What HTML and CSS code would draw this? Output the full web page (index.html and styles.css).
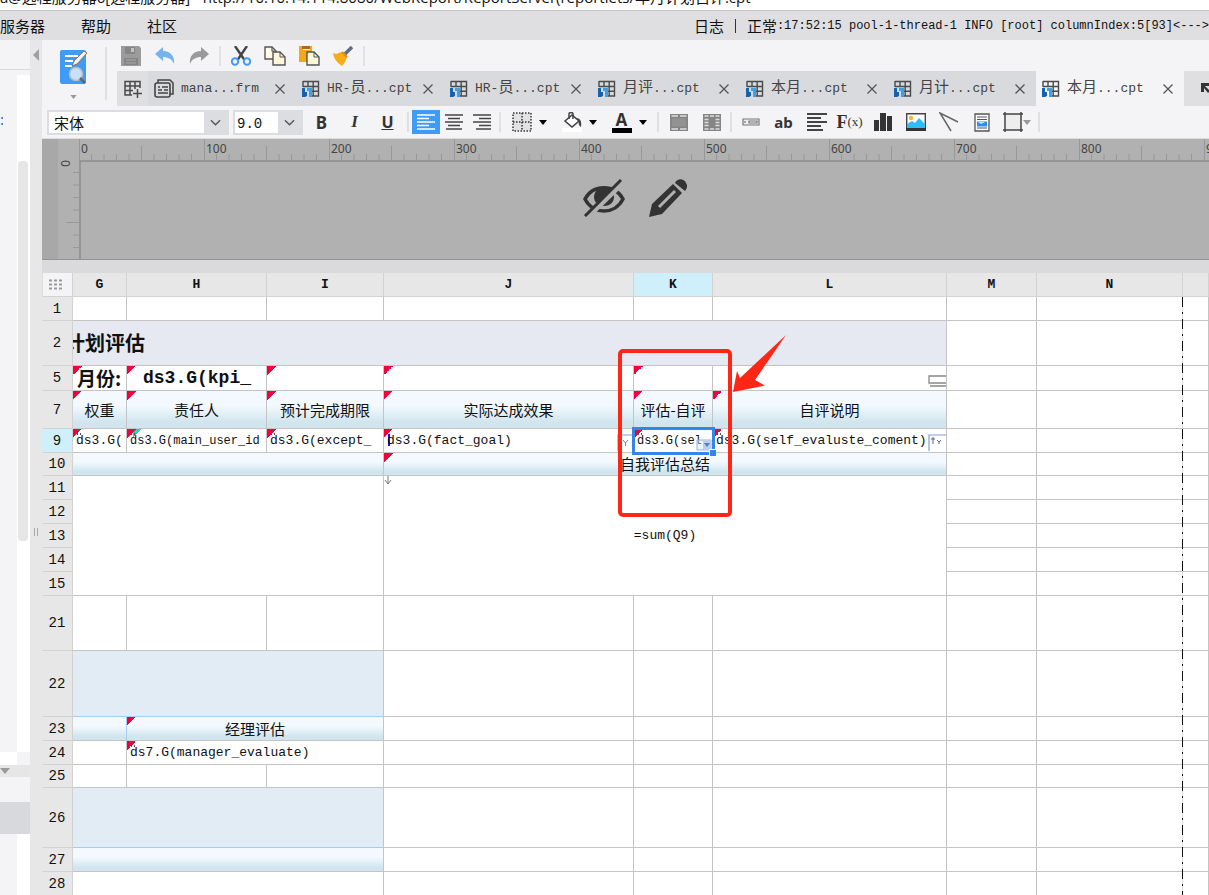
FILE: index.html
```html
<!DOCTYPE html>
<html lang="zh-CN">
<head>
<meta charset="utf-8">
<title>月计划自评.cpt</title>
<link rel="stylesheet" href="styles.css">
</head>
<body>
<svg class="defs" aria-hidden="true">
  <symbol id="cpt" viewBox="0 0 18 18"><path d="M1 1.500h15.500v14.500H9M1 1v6M1 6.500h15.500M6 1v6M11.200 1v15M9 11.300h7.500" fill="none" stroke="#4a4a4a" stroke-width="1.400"/><path d="M0 8h3v4h2v-1l3-3H5v8l-2 1H0z" fill="#1462b0"/><path d="M5 8h5v9H7v-6H5z" fill="#35a4ea"/></symbol>
  <symbol id="x" viewBox="0 0 12 12"><path d="M1.500 1.500l9 9M10.500 1.500l-9 9" stroke="#555" stroke-width="1.300"/></symbol>
  <symbol id="chev" viewBox="0 0 12 8"><path d="M1 1.500l5 5 5-5" fill="none" stroke="#555" stroke-width="1.500"/></symbol>
  <symbol id="caret" viewBox="0 0 8 5"><path d="M0 0h8L4 5z"/></symbol>
</svg>
<header class="titlebar">a@远程服务器6[远程服务器] - http://10.10.14.114:8080/WebReport/ReportServer(reportlets/年月计划自评.cpt</header>
<nav class="menubar">
  <button class="menu">服务器</button><button class="menu">帮助</button><button class="menu">社区</button>
  <div class="log"><span class="status">日志<i></i>正常</span><span class="mono">:17:52:15 pool-1-thread-1 INFO [root] columnIndex:5[93]&lt;---&gt;</span></div>
</nav>
<div class="workspace">
  <aside class="side">
    <div class="side-head"></div>
    <div class="side-tree"><span class="side-text">:</span><div class="side-scroll"><div class="thumb"></div></div></div>
    <div class="side-corner"></div>
    <div class="side-split"><svg width="10" height="6" viewBox="0 0 10 6"><path d="M0 0h10L5 6z" fill="#999"/></svg></div>
    <div class="side-gap"></div><div class="side-sel"></div>
    <div class="side-rest"></div>
  </aside>
  <div class="splitter"><svg width="6" height="12" viewBox="0 0 6 12"><path d="M6 0v12L0 6z" fill="#a0a0a0"/></svg><i class="grip"></i></div>
  <main class="editor">
    <div class="top">
      <button class="preview" aria-label="预览">
        <svg width="28" height="36" viewBox="0 0 28 36"><rect y="1" width="26" height="34" rx="2" fill="#409bf7"/><path d="M5 7h13M5 12h8M5 17h7" stroke="#fff" stroke-width="2"/><path d="M12 17l2-5L24 2l3 2-10 11z" fill="#f4f4f4" stroke="#777"/><circle cx="16" cy="25" r="6.500" fill="#c8e1fa" stroke="#bbb" stroke-width="1.500"/><path d="M20 29l5 5" stroke="#666" stroke-width="2.500"/></svg>
        <svg class="grey" width="7" height="4"><use href="#caret"/></svg>
      </button>
      <div class="top-right">
        <div class="quick">
          <button aria-label="保存"><svg width="20" height="20" viewBox="0 0 20 20"><path d="M0 0h18l2 2v18H0z" fill="#9b9b9b"/><path d="M4 1h10v7H4zM3 12h14v7H3z" fill="#858585"/><path d="M10 2h3v4h-3z" fill="#c4c4c4"/><path d="M5 14h10M5 17h10" stroke="#aaa"/></svg></button>
          <button aria-label="撤销"><svg width="20" height="20" viewBox="0 0 20 20"><path d="M8 1L0 8l8 7v-4c5 0 9 2 11 7 1-7-3-13-11-13z" fill="#76b3ee"/></svg></button>
          <button aria-label="重做"><svg width="20" height="20" viewBox="0 0 20 20"><path d="M12 1l8 7-8 7v-4c-5 0-9 2-11 7C0 11 4 5 12 5z" fill="#9a9a9a"/></svg></button>
          <i class="sep"></i>
          <button aria-label="剪切"><svg width="20" height="20" viewBox="0 0 20 20"><path d="M4 0l9.500 14M16 0L6.500 14" stroke="#444" stroke-width="2.400"/><circle cx="4" cy="15.500" r="3.200" fill="none" stroke="#409bf7" stroke-width="2"/><circle cx="16" cy="15.500" r="3.200" fill="none" stroke="#409bf7" stroke-width="2"/></svg></button>
          <button aria-label="复制"><svg width="22" height="20" viewBox="0 0 22 20"><path d="M1 1h7l4 4v8H1z" fill="#fffbe8" stroke="#555" stroke-width="1.400"/><path d="M8 1v4h4M16 6v5h5" fill="none" stroke="#555" stroke-width="1.200"/><path d="M9 6h7l5 5v8H9z" fill="#fff6dc" stroke="#555" stroke-width="1.400"/><path d="M16 6v5h5" fill="none" stroke="#555"/></svg></button>
          <button aria-label="粘贴"><svg width="22" height="20" viewBox="0 0 22 20"><path d="M1 0h13v16H1z" fill="#f0a81c"/><path d="M4 0h8v3H4z" fill="#b8622a"/><path d="M5 3.500h7" stroke="#fff"/><path d="M9 6h7l5 5v8H9z" fill="#fff6dc" stroke="#555" stroke-width="1.400"/><path d="M16 6v5h5" fill="none" stroke="#555"/></svg></button>
          <button aria-label="格式刷"><svg width="20" height="20" viewBox="0 0 20 20"><path d="M12 8l7-7" stroke="#646c80" stroke-width="3.500"/><path d="M0 7c4 2 7-1 9-1l5 5c-1 3-2 6-5 9-4-3-8-6-9-13z" fill="#f6ad18"/><path d="M9 6l5 5" stroke="#e98a10" stroke-width="2"/></svg></button>
          <i class="sep"></i>
        </div>
        <div class="tabs">
          <button class="add" aria-label="新建"><svg width="18" height="18" viewBox="0 0 18 18"><path d="M8 15H1V1.500h15V8M1 6h15M1 10.500h8M6 1v14M11 1v8M13.500 9v9M9 13.500h9" fill="none" stroke="#4a4a4a" stroke-width="1.500"/></svg></button>
          <button class="tab"><svg width="20" height="19" viewBox="0 0 20 19"><path d="M4 4V1h12l3 3v11h-3" fill="none" stroke="#444" stroke-width="1.500"/><rect x="1" y="4" width="15" height="14" rx="2" fill="#d9dadd" stroke="#444" stroke-width="1.600"/><path d="M4 8h2M8 8h6M4 11h4M10 11h4M4 14h10" stroke="#444" stroke-width="1.600"/></svg><span class="mono">mana...frm</span><svg class="close"><use href="#x"/></svg></button>
          <button class="tab"><svg class="cpt"><use href="#cpt"/></svg><span class="mono">HR-<b>员</b>...cpt</span><svg class="close"><use href="#x"/></svg></button>
          <button class="tab"><svg class="cpt"><use href="#cpt"/></svg><span class="mono">HR-<b>员</b>...cpt</span><svg class="close"><use href="#x"/></svg></button>
          <button class="tab"><svg class="cpt"><use href="#cpt"/></svg><span class="mono"><b>月评</b>...cpt</span><svg class="close"><use href="#x"/></svg></button>
          <button class="tab"><svg class="cpt"><use href="#cpt"/></svg><span class="mono"><b>本月</b>...cpt</span><svg class="close"><use href="#x"/></svg></button>
          <button class="tab"><svg class="cpt"><use href="#cpt"/></svg><span class="mono"><b>月计</b>...cpt</span><svg class="close"><use href="#x"/></svg></button>
          <button class="tab active"><svg class="cpt"><use href="#cpt"/></svg><span class="mono"><b>本月</b>...cpt</span><svg class="close"><use href="#x"/></svg></button>
          <button class="more" aria-label="更多"><svg width="12" height="12" viewBox="0 0 12 12"><path d="M0 0h12v3H4l5 5-2 2-4-5v4H0z" fill="#333"/></svg></button>
        </div>
      </div>
    </div>
    <div class="format">
      <label class="pick family"><select aria-label="字体"><option>宋体</option></select><svg><use href="#chev"/></svg></label>
      <label class="pick size"><select class="mono" aria-label="字号"><option>9.0</option></select><svg><use href="#chev"/></svg></label>
      <button class="b">B</button><button class="it">I</button><button class="u">U</button>
      <i class="sep"></i>
      <button class="al on" aria-label="左对齐"><svg width="20" height="18" viewBox="0 0 20 18"><path d="M1 2h18M1 5.500h12M1 9h18M1 12.500h12M1 16h18" stroke="#fff" stroke-width="1.500"/></svg></button>
      <button class="al" aria-label="居中"><svg width="20" height="18" viewBox="0 0 20 18"><path d="M1 2h18M4 5.500h12M1 9h18M4 12.500h12M2 16h16" stroke="#444" stroke-width="1.500"/></svg></button>
      <button class="al" aria-label="右对齐"><svg width="20" height="18" viewBox="0 0 20 18"><path d="M1 2h18M7 5.500h12M1 9h18M7 12.500h12M4 16h15" stroke="#444" stroke-width="1.500"/></svg></button>
      <i class="sep"></i>
      <button class="dd" aria-label="边框"><svg width="20" height="20" viewBox="0 0 20 20"><path d="M1 1h18v18H1zM10 1v18M1 10h18" fill="#e2e2e4" stroke="#333" stroke-width="1.500" stroke-dasharray="1.500 1.500"/></svg><svg class="car"><use href="#caret"/></svg></button>
      <button class="dd" aria-label="填充"><svg width="20" height="20" viewBox="0 0 20 20"><path d="M3 9l7-6 7 6-7 6z" fill="#fff" stroke="#444" stroke-width="1.600"/><path d="M7 7V2c0-2 4-2 4 0v5" fill="none" stroke="#444" stroke-width="1.500"/><path d="M14 6c4 0 6 3 5 9-2-1-3-4-2-6z" fill="#444"/><path d="M0 16h20v4H0z" fill="#fff"/></svg><svg class="car"><use href="#caret"/></svg></button>
      <button class="dd" aria-label="字体颜色"><span class="fontcolor">A</span><svg class="car"><use href="#caret"/></svg></button>
      <i class="sep"></i>
      <button aria-label="合并单元格"><svg width="18" height="17" viewBox="0 0 18 17"><path d="M0 0h18v17H0z" fill="#858585"/><path d="M1.500 2h6.500M10 2h6.500M1.500 15h6.500M10 15h6.500" stroke="#ddd" stroke-width="1.500"/><path d="M2 4.500h14v8H2z" fill="#929292"/></svg></button>
      <button aria-label="取消合并"><svg width="18" height="17" viewBox="0 0 18 17"><path d="M0 0h18v17H0z" fill="#858585"/><path d="M1.500 2h4M7 2h4M12.500 2h4M1.500 15h4M7 15h4M12.500 15h4M1.500 8.500h4M12.500 8.500h4M1.500 11.500h4M12.500 11.500h4M1.500 5.500h4M12.500 5.500h4" stroke="#ddd" stroke-width="1.500"/></svg></button>
      <i class="sep near"></i>
      <button aria-label="控件"><svg width="18" height="8" viewBox="0 0 18 8"><path d="M1 1h16v6H1zM3 3v2M7 3h8v2H7z" fill="#eee" stroke="#777" stroke-width="1.200"/></svg></button>
      <button class="ab">ab</button>
      <button aria-label="段落"><svg width="20" height="18" viewBox="0 0 20 18"><path d="M0 1h20M0 5h14M0 9h20M0 13h14M0 17h16" stroke="#444" stroke-width="1.800"/></svg></button>
      <button class="fx">F<small>(x)</small></button>
      <button aria-label="图表"><svg width="18" height="18" viewBox="0 0 18 18"><path d="M0 7h5v11H0zM6 0h6v18H6zM13 3h5v15h-5z" fill="#333"/></svg></button>
      <button aria-label="图片"><svg width="20" height="18" viewBox="0 0 20 18"><path d="M.7.700h18.600v16.600H.7z" fill="#fff" stroke="#444" stroke-width="1.400"/><path d="M1 11l5-3 3 2 4-5 6 6v4H1z" fill="#2fbdf6"/><path d="M0 15h20v3H0z" fill="#333"/><circle cx="5" cy="5" r="2.200" fill="#fbb62b"/></svg></button>
      <button aria-label="斜线"><svg width="20" height="20" viewBox="0 0 20 20"><path d="M12 19L1 1l18 9" fill="none" stroke="#666" stroke-width="1.500"/></svg></button>
      <button aria-label="子报表"><svg width="16" height="19" viewBox="0 0 16 19"><path d="M1 1h14v17H1z" fill="#fff" stroke="#555" stroke-width="1.300"/><path d="M3 4h10M3 6.500h10M3 15h10" stroke="#555"/><path d="M3 8.500h10v5H3z" fill="#2f8ded"/><path d="M4 9h7l-4 2z" fill="#c5e7ff"/></svg></button>
      <button class="frame" aria-label="悬浮元素"><svg width="20" height="20" viewBox="0 0 20 20"><path d="M2 2h16v16H2z" fill="#eee"/><path d="M2 0v20M18 0v20M0 2h20M0 18h20" stroke="#444" stroke-width="1.500"/></svg><svg class="car grey"><use href="#caret"/></svg></button>
      <i class="sep near"></i>
    </div>
    <section class="param">
      <svg class="hruler" aria-hidden="true">
        <defs><pattern id="hticks" x="37" width="125" height="22" patternUnits="userSpaceOnUse"><path d="M.5 0v22M62.500 7v15" stroke="#989898"/><path d="M12.500 15v7M25 15v7M37.500 15v7M50 15v7M75 15v7M87.500 15v7M100 15v7M112.500 15v7" stroke="#989898"/></pattern></defs>
        <rect class="dark" width="16" height="22"/><rect x="37" width="100%" height="22" fill="url(#hticks)"/>
        <text x="39" y="14">0</text><text x="164" y="14">100</text><text x="289" y="14">200</text><text x="414" y="14">300</text><text x="539" y="14">400</text><text x="664" y="14">500</text><text x="789" y="14">600</text><text x="914" y="14">700</text><text x="1039" y="14">800</text><text x="1164" y="14">900</text>
      </svg>
      <div class="param-body">
        <svg class="vruler" aria-hidden="true"><rect class="dark" width="16" height="100"/><path d="M31 12.500h6M31 25h6M31 37.500h6M31 50h6M24 62.500h13M31 75h6M31 87.500h6" stroke="#989898"/><text transform="translate(19 0) rotate(90)">0</text></svg>
        <div class="canvas">
          <button aria-label="隐藏"><svg width="42" height="38" viewBox="0 0 42 38"><path d="M2 20C10 5 32 5 40 20 32 36 10 36 2 20z" fill="none" stroke="#333" stroke-width="3.500"/><path d="M11 18c0-12 20-12 20 0 0 12-20 12-20 0z" fill="#333"/><path d="M5 37L40 3" stroke="#b1b1b1" stroke-width="6"/><path d="M2 37L38 1" stroke="#333" stroke-width="3"/></svg></button>
          <button aria-label="编辑"><svg width="38" height="38" viewBox="0 0 38 38"><path d="M0 38l3-13L24 5l9 9-20 21z" fill="#333"/><path d="M10 28L26 12" stroke="#b1b1b1" stroke-width="3"/><path d="M26 4c2-5 9-5 11 0 2 3 1 5-1 8z" fill="#333"/></svg></button>
        </div>
      </div>
    </section>
    <section class="sheet">
      <table>
        <colgroup><col class="c-n"><col class="c-g"><col class="c-h"><col class="c-i"><col class="c-j"><col class="c-k"><col class="c-l"><col class="c-m"><col class="c-o"><col></colgroup>
        <thead><tr class="h24"><th class="corner"><svg width="13" height="11" viewBox="0 0 13 11"><path d="M0 1.500h3m2 0h3m2 0h3M0 5.500h3m2 0h3m2 0h3M0 9.500h3m2 0h3m2 0h3" stroke="#999" stroke-width="2"/></svg></th><th>G</th><th>H</th><th>I</th><th>J</th><th class="hot">K</th><th>L</th><th>M</th><th>N</th><th></th></tr></thead>
        <tbody>
        <tr class="h24"><th>1</th><td></td><td></td><td></td><td></td><td></td><td></td><td></td><td></td><td></td></tr>
        <tr class="h45"><th>2</th><td class="title" colspan="6">计划评估</td><td></td><td></td><td></td></tr>
        <tr class="h25"><th>5</th><td class="mk big">月份:</td><td class="mk big mono pad">ds3.G(kpi_</td><td class="mk"></td><td class="mk"></td><td class="mk"></td><td class="right"><svg width="18" height="12" viewBox="0 0 18 12"><path d="M18 1H1v7h17M2 11h16" fill="none" stroke="#888" stroke-width="1.300"/></svg></td><td></td><td></td><td></td></tr>
        <tr class="h38"><th>7</th><td class="mk grad">权重</td><td class="mk grad">责任人</td><td class="mk grad">预计完成期限</td><td class="mk grad">实际达成效果</td><td class="mk grad">评估-自评</td><td class="mk grad">自评说明</td><td></td><td></td><td></td></tr>
        <tr class="h24"><th class="hot">9</th><td class="mk code">ds3.G(</td><td class="mk code teal">ds3.G(main_user_id</td><td class="mk code">ds3.G(except_</td><td class="mk code anchor"><div class="field">ds3.G(fact_goal)<svg width="16" height="17" viewBox="0 0 16 17"><path d="M16 1H1v16" fill="none" stroke="#7da0d4" stroke-width="1.200"/><path d="M6 6l2.500 3L11 6M8.500 9v3" fill="none" stroke="#789"/></svg></div></td><td class="mk code selected"><div class="field">ds3.G(sel<svg width="16" height="12" viewBox="0 0 16 12"><path d="M1 1h14v10H1z" fill="#dce8f8" fill-opacity=".5" stroke="#8fb0dc"/><path d="M7 1h8v10H7z" fill="#b8cfee"/><path d="M8 4h6l-3 4z" fill="#5d7fb5"/></svg></div><i class="handle"></i></td><td class="mk code"><div class="field">ds3.G(self_evaluste_coment)<svg width="18" height="17" viewBox="0 0 18 17"><path d="M18 1H1v16" fill="none" stroke="#7da0d4" stroke-width="1.200"/><path d="M3 5h4M5 3v7M9 6l2 2 2-2M11 8v2" fill="none" stroke="#567"/></svg></div></td><td></td><td></td><td></td></tr>
        <tr class="h23"><th>10</th><td class="grad" colspan="3"></td><td class="mk grad" colspan="3">自我评估总结</td><td></td><td></td><td></td></tr>
        <tr class="h24"><th>11</th><td colspan="3" rowspan="5"></td><td class="mono formula" colspan="3" rowspan="5"><svg class="expand" width="8" height="9" viewBox="0 0 8 9"><path d="M4 0v7M1 4l3 4 3-4" fill="none" stroke="#777"/></svg>=sum(Q9)</td><td></td><td></td><td></td></tr>
        <tr class="h24"><th>12</th><td></td><td></td><td></td></tr>
        <tr class="h24"><th>13</th><td></td><td></td><td></td></tr>
        <tr class="h24"><th>14</th><td></td><td></td><td></td></tr>
        <tr class="h24"><th>15</th><td></td><td></td><td></td></tr>
        <tr class="h55"><th>21</th><td></td><td></td><td></td><td></td><td></td><td></td><td></td><td></td><td></td></tr>
        <tr class="h66"><th>22</th><td class="pale" colspan="3"></td><td></td><td></td><td></td><td></td><td></td><td></td></tr>
        <tr class="h24"><th>23</th><td class="grad blue"></td><td class="mk grad blue" colspan="2">经理评估</td><td></td><td></td><td></td><td></td><td></td><td></td></tr>
        <tr class="h24"><th>24</th><td></td><td class="mk code" colspan="2">ds7.G(manager_evaluate)</td><td></td><td></td><td></td><td></td><td></td><td></td></tr>
        <tr class="h23"><th>25</th><td></td><td></td><td></td><td></td><td></td><td></td><td></td><td></td><td></td></tr>
        <tr class="h60"><th>26</th><td class="pale" colspan="3"></td><td></td><td></td><td></td><td></td><td></td><td></td></tr>
        <tr class="h24"><th>27</th><td class="grad blue" colspan="3"></td><td></td><td></td><td></td><td></td><td></td><td></td></tr>
        <tr class="h24"><th>28</th><td colspan="3"></td><td></td><td></td><td></td><td></td><td></td><td></td></tr>
        </tbody>
      </table>
      <i class="pagebreak"></i>
      <i class="callout"></i>
      <svg class="arrow" width="56" height="60" viewBox="0 0 56 60"><path d="M54 1L23 46l10 5.500L1 58l4-21 3 7z" fill="#ff2616"/></svg>
    </section>
  </main>
</div>
</body>
</html>
```
FILE: styles.css
```css
* { box-sizing: border-box; }
body { margin: 0; height: 100vh; overflow: hidden; display: flex; flex-direction: column; background: #fff; color: #111; font: 15px/20px "Noto Sans CJK SC", sans-serif; }
button { border: 0; background: none; padding: 0; margin: 0; color: #333; font: inherit; display: flex; align-items: center; justify-content: center; }
svg { flex: none; display: block; }
.defs { display: none; }
.mono { font-family: "Liberation Mono", "Noto Sans CJK SC", monospace; font-size: 13px; }
.titlebar { flex: none; height: 11px; overflow: hidden; white-space: nowrap; display: flex; align-items: flex-end; padding-bottom: 4px; font-family: "Open Sans", "Noto Sans CJK SC", sans-serif; line-height: 18px; border-bottom: 1px solid #c4c4c4; }
.menubar { flex: none; height: 29px; background: #dfdfe1; display: flex; align-items: center; gap: 36px; overflow: hidden; }
.menu { color: #111; }
.log { margin-left: auto; display: flex; white-space: nowrap; }
.log .mono { font-size: 12px; line-height: 22px; }
.status { display: flex; align-items: center; }
.status i { width: 1px; height: 14px; margin: 0 11px; background: #333; }
.workspace { flex: 1; display: flex; min-height: 0; }

.side { width: 30px; flex: none; display: flex; flex-direction: column; background: #f4f4f7; }
.side-head { height: 30px; border-bottom: 1px solid #d8d8da; }
.side-tree { height: 682px; padding-top: 5px; display: flex; justify-content: space-between; }
.side-text { color: #3b6fc4; width: 3px; padding-top: 34px; overflow: hidden; }
.side-scroll { width: 13px; background: #fff; padding: 86px 2px 0 1px; }
.thumb { height: 380px; border-radius: 4px; background: #e6e6e6; }
.side-corner { height: 13px; margin-right: 13px; background: #fff; }
.side-split { height: 12px; background: #e6e6e6; padding-top: 3px; }
.side-gap { height: 25px; }
.side-sel { height: 32px; background: #d8d9dc; }
.side-rest { flex: 1; margin-left: 17px; background: #fff; }
.splitter { width: 12px; flex: none; background: #e7e7e7; display: flex; flex-direction: column; align-items: center; padding-top: 9px; }
.grip { width: 4px; height: 8px; margin-top: 467px; border: solid #aaa; border-width: 0 1px; }

.editor { flex: 1; min-width: 0; background: #f4f4f7; display: flex; flex-direction: column; }
.top { height: 66px; flex: none; display: flex; }
.preview { width: 65px; height: 53px; margin: 7px 7px 0 0; border-right: 2px solid #e0e0e2; flex-direction: column; gap: 10px; }
.grey { fill: #999; }
.top-right { flex: 1; min-width: 0; display: flex; flex-direction: column; }
.quick { height: 31px; display: flex; align-items: center; }
.quick button { width: 34px; height: 30px; }
.sep { width: 2px; height: 20px; background: #e0e0e2; margin: 0 3px; flex: none; }
.tabs { height: 35px; margin-left: 3px; display: flex; background: #d9dadd; overflow: hidden; }
.add { width: 31px; flex: none; background: #dfdfe2; }
.tab { width: 148px; flex: none; justify-content: flex-start; gap: 7px; padding: 0 10px 0 6px; color: #444; }
.tab span { flex: 1; text-align: left; white-space: nowrap; }
.tab b { font-weight: normal; font-size: 15px; }
.tab.active { background: #f4f4f7; }
.cpt { width: 18px; height: 18px; }
.close { width: 12px; height: 12px; }
.more { flex: 1; background: #dfdfe2; justify-content: flex-start; padding-left: 17px; }

.format { height: 33px; flex: none; display: flex; align-items: center; padding-left: 5px; border-bottom: 1px solid #ddd; overflow: hidden; }
.format button { width: 33px; height: 26px; flex: none; }
.pick { position: relative; height: 25px; flex: none; border: 2px solid #dcdde0; background: #fff; margin-right: 4px; }
.pick select { appearance: none; border: 0; width: 100%; height: 21px; padding: 0 0 0 5px; background: none; color: #111; font-size: 15px; }
.pick select:not(.mono) { font-family: "Noto Sans CJK SC", sans-serif; }
.pick .mono { padding-left: 2px; font-size: 14px; }
.pick svg { position: absolute; right: 0; top: 0; width: 23px; height: 21px; padding: 6px; background: #dcdde0; pointer-events: none; }
.family { width: 182px; }
.size { width: 70px; margin-right: 2px; }
.format .b { font: bold 17px "Noto Sans", sans-serif; }
.format .it { font: italic bold 17px "Liberation Serif", serif; }
.format .u { font: bold 16px "Noto Sans", sans-serif; text-decoration: underline; }
.format .al { width: 28px; height: 24px; }
.format .on { background: #409bf7; }
.format .dd { width: 50px; gap: 7px; }
.format .car { width: 8px; height: 5px; }
.fontcolor { width: 20px; border-bottom: 5px solid #000; font: bold 17px/16px "Noto Sans", sans-serif; }
.near { margin: 0 2px; }
.format .ab { font: bold 15px "Noto Sans", sans-serif; }
.format .fx { font: bold 18px "Liberation Serif", serif; }
.fx small { font-size: 13px; font-weight: normal; }
.format .frame { width: 38px; gap: 0; }

.param { flex: none; background: #b1b1b1; display: flex; flex-direction: column; height: 121px; border-bottom: 1px solid #939393; }
.param text { font: 12px "Noto Sans", sans-serif; fill: #444; }
.dark { fill: #a8a8a8; }
.hruler { width: 100%; height: 21px; flex: none; }
.param-body { flex: 1; display: flex; }
.vruler { width: 37px; height: 99px; }
.canvas { flex: 1; border: solid #959595; border-width: 2px 0 0 2px; display: flex; align-items: flex-start; justify-content: center; gap: 24px; padding: 17px 20px 0 0; }

.sheet { position: relative; border-top: 13px solid #dadadc; background: #fff; overflow: hidden; flex: none; }
table { width: 100%; table-layout: fixed; border-spacing: 0; }
.c-n { width: 31px; } .c-g { width: 54px; } .c-h { width: 140px; } .c-i { width: 117px; } .c-j { width: 250px; }
.c-k { width: 79px; } .c-l { width: 234px; } .c-m { width: 90px; } .c-o { width: 146px; }
.h23 { height: 23px; } .h24 { height: 24px; } .h25 { height: 25px; } .h38 { height: 38px; } .h45 { height: 45px; }
.h55 { height: 55px; } .h60 { height: 60px; } .h66 { height: 66px; }
th, td { padding: 0; border: solid #c4c4c4; border-width: 0 1px 1px 0; overflow: hidden; white-space: nowrap; }
th { background: #e7e7e7; border-color: #d2d2d2; font: bold 13px/18px "Liberation Mono", monospace; }
tbody th { font-weight: normal; font-size: 14px; }
th.corner { background: #f4f4f7; border-left: 1px solid #ddd; padding-right: 4px; }
.corner svg { margin: auto; }
th.hot { background: #cfeffb; }
td { text-align: center; line-height: 20px; }
td.title { background: #e6e9f1; text-align: left; text-indent: -8px; font-weight: bold; font-size: 20px; }
.mk { background: linear-gradient(135deg, #f5003d 50%, transparent 50%) 0 0 / 9px 9px no-repeat; }
.grad { background: linear-gradient(#f3f9ff 40%, #d0e5ee 85%); }
.mk.grad { background: linear-gradient(135deg, #f5003d 50%, transparent 50%) 0 0 / 9px 9px no-repeat, linear-gradient(#f3f9ff 40%, #d0e5ee 85%); }
.mk.code { background: repeating-linear-gradient(105deg, #7a4048 0 1px, transparent 1px 3px) 2px 1px / 6px 5px no-repeat, linear-gradient(135deg, #f5003d 50%, transparent 50%) 0 0 / 9px 9px no-repeat; }
.mk.teal { background: repeating-linear-gradient(105deg, #7a4048 0 1px, transparent 1px 3px) 2px 1px / 6px 5px no-repeat, linear-gradient(135deg, #f5003d 50%, transparent 50%) 0 0 / 9px 9px no-repeat, linear-gradient(135deg, #00e5b5 50%, transparent 50%) 6px 0 / 9px 9px no-repeat; }
.mk.anchor { background: linear-gradient(#1010ee, #1010ee) 4px 5px / 2px 12px no-repeat, linear-gradient(135deg, #f5003d 50%, transparent 50%) 0 0 / 9px 9px no-repeat; }
.pale { background: #e2ecf5; }
.blue { border-right-color: #a3cdf7; box-shadow: 0 -1px #a3cdf7; }
.big { font-weight: bold; font-size: 19px; text-align: left; padding-left: 4px; }
.big.mono { font-size: 18px; }
.big.pad { padding-left: 16px; }
.code { text-align: left; padding-left: 3px; font: 13px/20px "Liberation Mono", monospace; }
.teal { font-size: 12px; }
.field { display: flex; justify-content: space-between; align-items: flex-end; height: 20px; }
.right svg { margin: 6px 0 0 auto; }
.formula { position: relative; }
.expand { position: absolute; left: 0; top: 0; }
.selected { position: relative; overflow: visible; outline: 3px solid #3584ea; outline-offset: -1px; }
.handle { position: absolute; right: -4px; bottom: -4px; width: 7px; height: 7px; background: #3584ea; border: solid #fff; border-width: 1px 0 0 1px; }
.selected .field { font-size: 12px; }
.selected svg { margin-left: -8px; }
.pagebreak { position: absolute; left: 1140px; top: 24px; bottom: 0; width: 1px; background: repeating-linear-gradient(#111 0 10px, #ddd 10px 15px, #111 15px 17px, #ddd 17px 22px); }
.callout { position: absolute; left: 576px; top: 76px; width: 114px; height: 168px; border: 4px solid #ff2616; border-radius: 5px; }
.arrow { position: absolute; left: 690px; top: 61px; }
```
